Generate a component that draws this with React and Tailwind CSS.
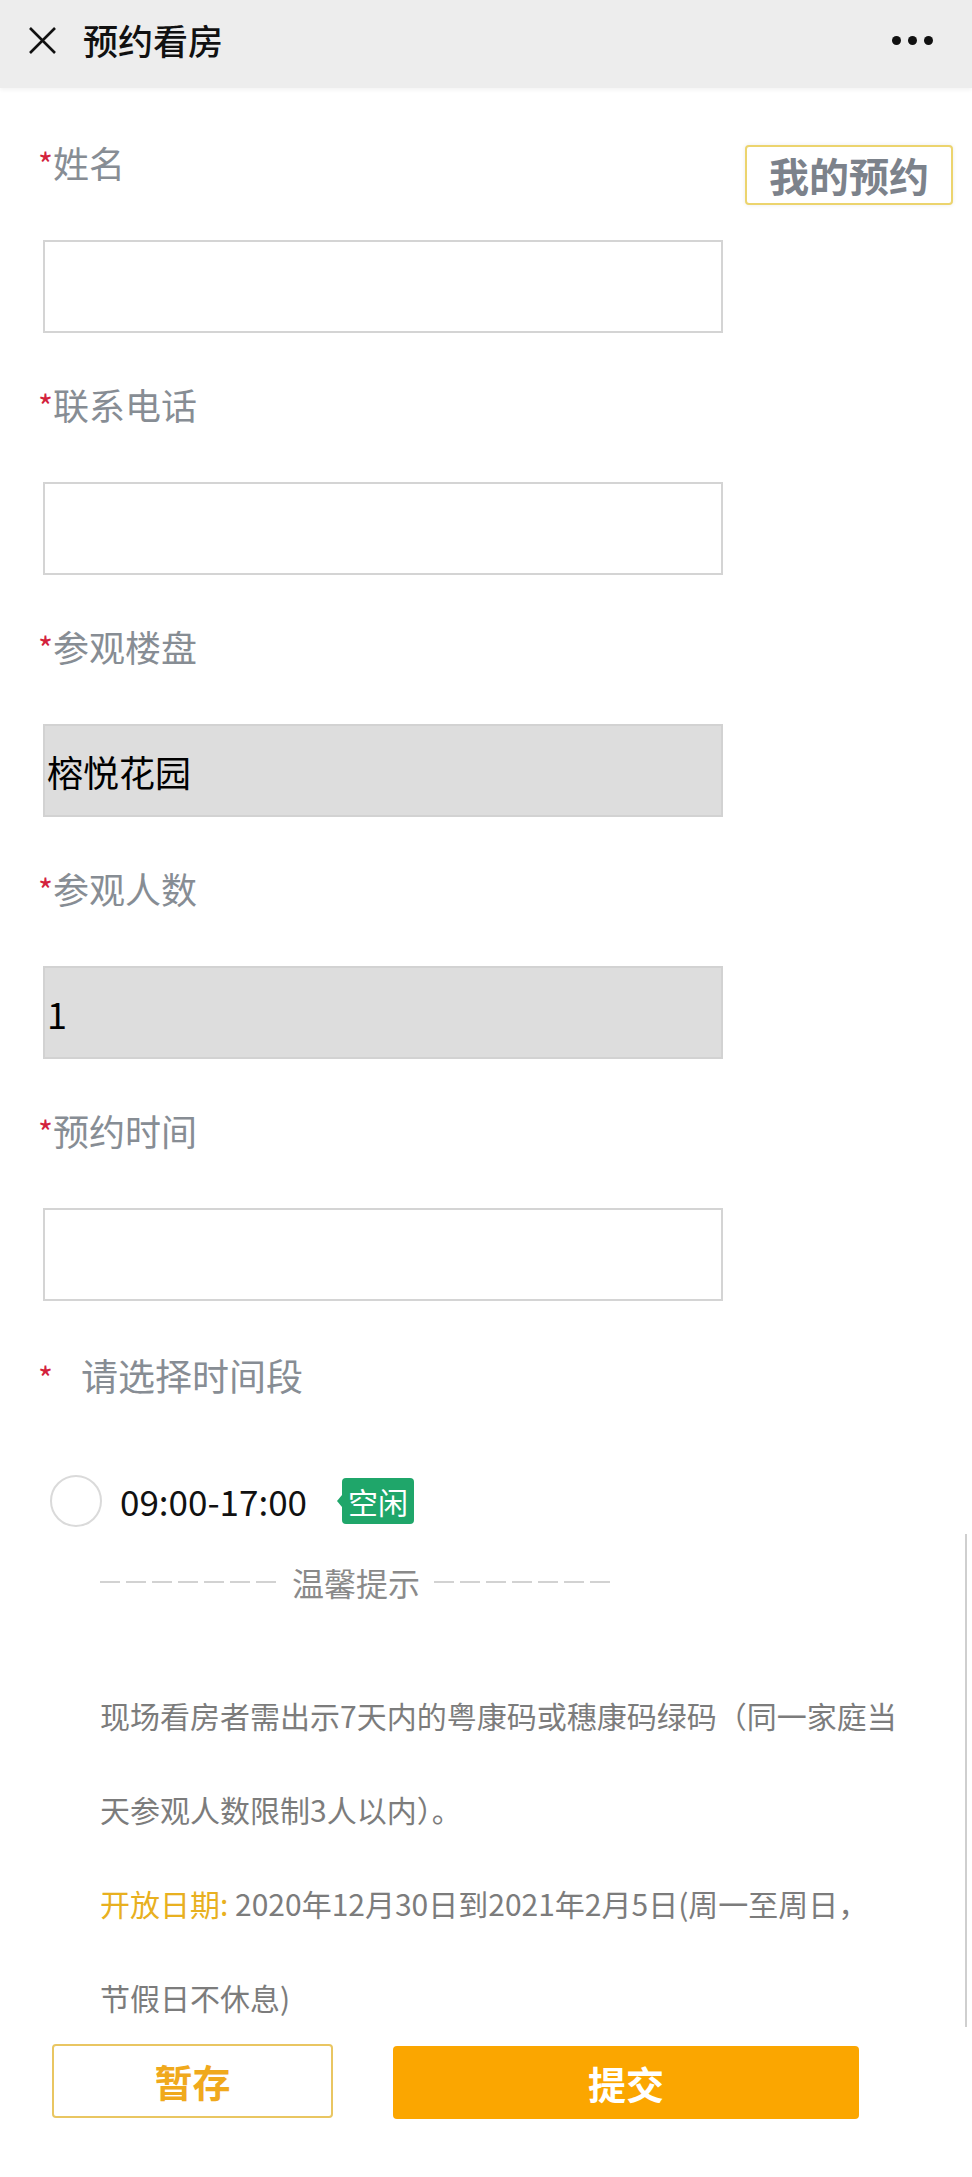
const labelCls = "h-[60px] flex items-baseline pl-[38px] text-[36px] leading-[60px]";

function Label({ text }) {
  return (
    <div className={labelCls}>
      <span className="text-[#d3223c] text-[32px] relative top-[-1px]">*</span>
      <span className="text-[#878d94]">{text}</span>
    </div>
  );
}

function Field({ label, value, disabled, first }) {
  return (
    <div className={first ? "" : "mt-[41px]"}>
      {first ? (
        <div className="h-[60px] flex justify-between items-start pr-[19px]">
          <Label text={label} />
          <button className="mt-[13px] w-[208px] h-[60px] border-2 border-[#ecd46e] rounded-[4px] bg-white text-[40px] font-bold text-[#7c828b] leading-[56px] shadow-[0_0_4px_rgba(0,0,0,0.08)]">
            我的预约
          </button>
        </div>
      ) : (
        <Label text={label} />
      )}
      <div
        className={
          "mt-[48px] ml-[43px] w-[680px] h-[93px] border-2 flex items-center pl-[2px] text-[36px] text-black " +
          (disabled ? "bg-[#dddddd] border-[#d2d2d2]" : "bg-white border-[#d4d4d4]")
        }
      >
        {value}
      </div>
    </div>
  );
}

export default function App() {
  return (
    <div
      className="relative w-[972px] min-h-[2177px] bg-white"
      style={{ fontFamily: '"Noto Sans CJK SC", "Noto Sans", sans-serif' }}
    >
      {/* header */}
      <div className="h-[88px] bg-[#ededed] flex items-center pb-[8px] pl-[28px] pr-[39px] shadow-[0_2px_4px_rgba(0,0,0,0.05)]">
        <svg width="29" height="29" viewBox="0 0 29 29">
          <path d="M2 2 L27 27 M27 2 L2 27" stroke="#111" strokeWidth="2.6" fill="none" />
        </svg>
        <div className="ml-[26px] text-[35px] leading-[48px] text-[#111] font-medium">预约看房</div>
        <div className="ml-auto flex gap-[7px]">
          <span className="w-[9px] h-[9px] rounded-full bg-[#111]" />
          <span className="w-[9px] h-[9px] rounded-full bg-[#111]" />
          <span className="w-[9px] h-[9px] rounded-full bg-[#111]" />
        </div>
      </div>

      {/* form */}
      <div className="pt-[44px]">
        <Field first label="姓名" />
        <Field label="联系电话" />
        <Field label="参观楼盘" value="榕悦花园" disabled />
        <Field label="参观人数" value="1" disabled />
        <Field label="预约时间" />

        <div className="mt-[44px] h-[60px] flex items-center pl-[38px] leading-[60px]">
          <span className="text-[#d3223c] text-[32px] relative top-[2px]">*</span>
          <span className="ml-[28px] text-[37px] text-[#878d94]">请选择时间段</span>
        </div>

        <div className="mt-[70px] h-[52px] flex items-center pl-[50px]">
          <div className="w-[52px] h-[52px] rounded-full border-2 border-[#dadada]" />
          <span className="ml-[18px] text-[35px] text-[#111] leading-[52px]">09:00-17:00</span>
          <div className="ml-[30px] flex items-center">
            <div className="w-0 h-0 border-y-[6px] border-y-transparent border-r-[5px] border-r-[#1fa66a]" />
            <div className="w-[72px] h-[46px] rounded-[4px] bg-[#1fa66a] text-white text-[30px] leading-[46px] text-center">
              空闲
            </div>
          </div>
        </div>

        {/* tips */}
        <div className="mt-[33px] h-[44px] flex items-center pl-[100px]">
          <div className="w-[178px] h-[2px] bg-[repeating-linear-gradient(90deg,#d2d2d2_0_20px,transparent_20px_26px)]" />
          <span className="mx-[14px] text-[32px] text-[#8a8a8a] leading-[44px]">温馨提示</span>
          <div className="w-[182px] h-[2px] bg-[repeating-linear-gradient(90deg,#d2d2d2_0_20px,transparent_20px_26px)]" />
        </div>

        <div className="mt-[64px] pl-[100px] w-[940px] text-[30px] leading-[94px] text-[#7c7c7c] whitespace-nowrap">
          <p>现场看房者需出示7天内的粤康码或穗康码绿码（同一家庭当</p>
          <p>天参观人数限制3人以内）。</p>
          <p>
            <span className="text-[#e8b020]">开放日期:</span> 2020年12月30日到2021年2月5日(周一至周日，
          </p>
          <p>节假日不休息)</p>
        </div>

        <div className="flex pl-[52px] gap-[60px] pb-[59px]">
          <button className="w-[281px] h-[74px] border-2 border-[#e9c662] rounded-[4px] bg-white text-[38px] font-bold text-[#f0a91c] leading-[70px]">
            暂存
          </button>
          <button className="mt-[2px] w-[466px] h-[73px] rounded-[4px] bg-[#fba600] text-[38px] font-bold text-white leading-[73px]">
            提交
          </button>
        </div>
      </div>

      {/* scroll indicator */}
      <div className="absolute top-[1534px] right-[5px] w-[2px] h-[493px] bg-[#cfcfcf]" />
    </div>
  );
}
